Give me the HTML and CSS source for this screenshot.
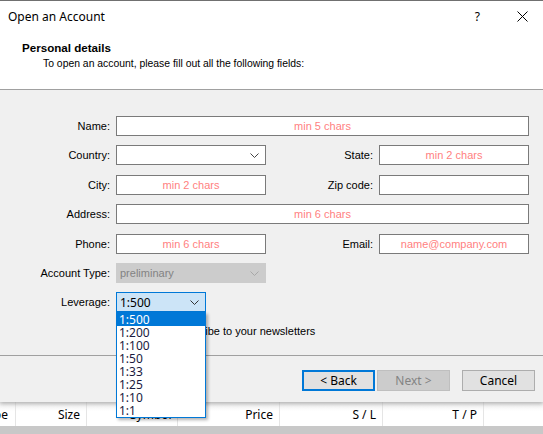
FILE: index.html
```html
<!DOCTYPE html>
<html lang="en">

<head>
    <meta charset="UTF-8">
    <meta name="viewport" content="width=device-width, initial-scale=1.0">
    <title>Open an Account</title>
    <link rel="stylesheet" href="styles.css">
</head>

<body>
    <div class="dialog">
        <div class="titlebar">
            <span class="title">Open an Account</span>
            <span class="help">?</span>
            <svg class="close" width="11" height="11" viewBox="0 0 11 11">
                <path d="M0.5 0.5 L10.5 10.5 M10.5 0.5 L0.5 10.5" stroke="#000" stroke-width="1" fill="none" />
            </svg>
        </div>

        <div class="header">
            <div class="header-title">Personal details</div>
            <div class="header-sub">To open an account, please fill out all the following fields:</div>
        </div>

        <div class="form">
            <div class="grid">
                <label>Name:</label>
                <div class="field wide"><span class="hint">min 5 chars</span></div>

                <label>Country:</label>
                <div class="field combo">
                    <svg class="arrow" width="9" height="5" viewBox="0 0 9 5"><path d="M0.5 0.5 L4.5 4.5 L8.5 0.5" stroke="#444" fill="none" /></svg>
                </div>
                <label>State:</label>
                <div class="field"><span class="hint">min 2 chars</span></div>

                <label>City:</label>
                <div class="field"><span class="hint">min 2 chars</span></div>
                <label>Zip code:</label>
                <div class="field"></div>

                <label>Address:</label>
                <div class="field wide"><span class="hint">min 6 chars</span></div>

                <label>Phone:</label>
                <div class="field"><span class="hint">min 6 chars</span></div>
                <label>Email:</label>
                <div class="field"><span class="hint">name@company.com</span></div>

                <label>Account Type:</label>
                <div class="field combo disabled">
                    <span class="value">preliminary</span>
                    <svg class="arrow" width="9" height="5" viewBox="0 0 9 5"><path d="M0.5 0.5 L4.5 4.5 L8.5 0.5" stroke="#a8a8a8" fill="none" /></svg>
                </div>
                <div class="filler"></div>

                <label>Leverage:</label>
                <div class="leverage-wrap">
                    <div class="field combo active">
                        <span class="value">1:500</span>
                        <svg class="arrow" width="9" height="5" viewBox="0 0 9 5"><path d="M0.5 0.5 L4.5 4.5 L8.5 0.5" stroke="#333" fill="none" /></svg>
                    </div>
                    <ul class="dropdown">
                        <li class="selected">1:500</li>
                        <li>1:200</li>
                        <li>1:100</li>
                        <li>1:50</li>
                        <li>1:33</li>
                        <li>1:25</li>
                        <li>1:10</li>
                        <li>1:1</li>
                    </ul>
                </div>
                <div class="filler"></div>

                <div></div>
                <div class="subscribe"><span class="checkbox"></span>Subscribe to your newsletters</div>
            </div>
        </div>

        <div class="buttons">
            <button class="btn default">&lt; Back</button>
            <button class="btn disabled">Next &gt;</button>
            <button class="btn cancel">Cancel</button>
        </div>
    </div>

    <div class="table-head">
        <div class="col c1">Type</div>
        <div class="col c2">Size</div>
        <div class="col c3">Symbol</div>
        <div class="col c4">Price</div>
        <div class="col c5">S / L</div>
        <div class="col c6">T / P</div>
        <div class="col c7"></div>
    </div>
</body>

</html>
```

FILE: styles.css
```css
body {
    margin: 0;
    width: 543px;
    height: 434px;
    overflow: hidden;
    background: #c8c8c8;
    font-family: 'Liberation Sans', Arial, sans-serif;
    font-size: 11px;
    color: #000;
}

.dialog {
    position: relative;
    z-index: 2;
    border-top: 1px solid #707070;
    box-shadow: 0 2px 4px rgba(0, 0, 0, 0.25);
}

.titlebar {
    height: 30px;
    background: #fff;
    display: flex;
    align-items: center;
    font-family: 'Noto Sans', 'DejaVu Sans', sans-serif;
    font-size: 12px;
}

.title {
    margin-left: 8px;
    flex: 1;
}

.help {
    margin-right: 37px;
    font-size: 12px;
}

.close {
    margin-right: 15px;
}

.header {
    background: #fff;
    height: 58px;
    border-bottom: 1px solid #a0a0a0;
}

.header-title {
    font-weight: bold;
    font-size: 11.6px;
    padding: 10px 0 0 22px;
    line-height: 13px;
}

.header-sub {
    font-size: 10.4px;
    padding: 3px 0 0 43px;
    line-height: 13px;
}

.form {
    background: #f0f0f0;
    height: 266px;
    border-bottom: 1px solid #a0a0a0;
    padding-top: 26px;
    box-sizing: border-box;
}

.grid {
    display: grid;
    grid-template-columns: 110px 150px 101px 150px;
    grid-auto-rows: 20px;
    column-gap: 6px;
    row-gap: 9.4px;
}

.grid label {
    display: flex;
    align-items: center;
    justify-content: flex-end;
}

.field {
    position: relative;
    background: #fff;
    border: 1px solid #7a7a7a;
    box-sizing: border-box;
    height: 20px;
    display: flex;
    align-items: center;
    justify-content: center;
}

.field.wide {
    grid-column: 2 / 5;
}

.hint {
    color: #ff7f7f;
}

.combo {
    justify-content: flex-start;
    padding-left: 3px;
}

.arrow {
    position: absolute;
    right: 6px;
    top: 7px;
}

.combo.disabled {
    background: #cccccc;
    border-color: #cccccc;
    color: #838383;
}

.filler {
    grid-column: 3 / 5;
}

.leverage-wrap {
    position: relative;
    width: 90px;
}

.combo.active {
    background: #cce4f7;
    border-color: #0078d7;
    font-family: 'Noto Sans', 'DejaVu Sans', sans-serif;
    font-size: 12px;
}

.dropdown {
    position: absolute;
    left: 0;
    top: 20px;
    width: 90px;
    margin: 0;
    padding: 0;
    list-style: none;
    background: #fff;
    border: 1px solid #0078d7;
    box-sizing: border-box;
    box-shadow: 2px 2px 3px rgba(0, 0, 0, 0.3);
    font-family: 'Noto Sans', 'DejaVu Sans', sans-serif;
    font-size: 12px;
    color: #1a1a40;
    z-index: 5;
}

.dropdown li {
    height: 13px;
    line-height: 13px;
    padding-left: 2px;
}

.dropdown li.selected {
    background: #0078d7;
    color: #fff;
}

.subscribe {
    grid-column: 2 / 5;
    display: flex;
    align-items: center;
    margin-top: -2px;
    padding-left: 36px;
}

.checkbox {
    width: 11px;
    height: 11px;
    border: 1px solid #333;
    background: #fff;
    margin-right: 6px;
}

.buttons {
    background: #f0f0f0;
    height: 46px;
    display: flex;
    justify-content: flex-end;
    align-items: flex-start;
    padding: 14px 8px 0 0;
    box-sizing: border-box;
}

.btn {
    width: 73px;
    height: 21px;
    padding: 0;
    font-family: 'Noto Sans', 'DejaVu Sans', sans-serif;
    font-size: 12px;
    background: #e1e1e1;
    border: 1px solid #adadad;
    color: #000;
}

.btn.default {
    border: 2px solid #0078d7;
    margin-right: 2px;
}

.btn.disabled {
    background: #cccccc;
    border-color: #bfbfbf;
    color: #838383;
    margin-right: 12px;
}

.table-head {
    position: relative;
    z-index: 1;
    display: flex;
    height: 24px;
    background: linear-gradient(#f0f0f0, #fff 40%);
    font-family: 'Noto Sans', 'DejaVu Sans', sans-serif;
    font-size: 12px;
}

.col {
    display: flex;
    align-items: center;
    justify-content: flex-end;
    padding-right: 6px;
    border-right: 1px solid #e5e5e5;
    overflow: hidden;
    white-space: nowrap;
    box-sizing: border-box;
}

.c1 { width: 16px; padding-right: 7px; }
.c2 { width: 71px; }
.c3 { width: 91px; justify-content: flex-start; padding-left: 43px; }
.c4 { width: 102px; }
.c5 { width: 103px; }
.c6 { width: 101px; }
.c7 { flex: 1; border-right: none; }
```
